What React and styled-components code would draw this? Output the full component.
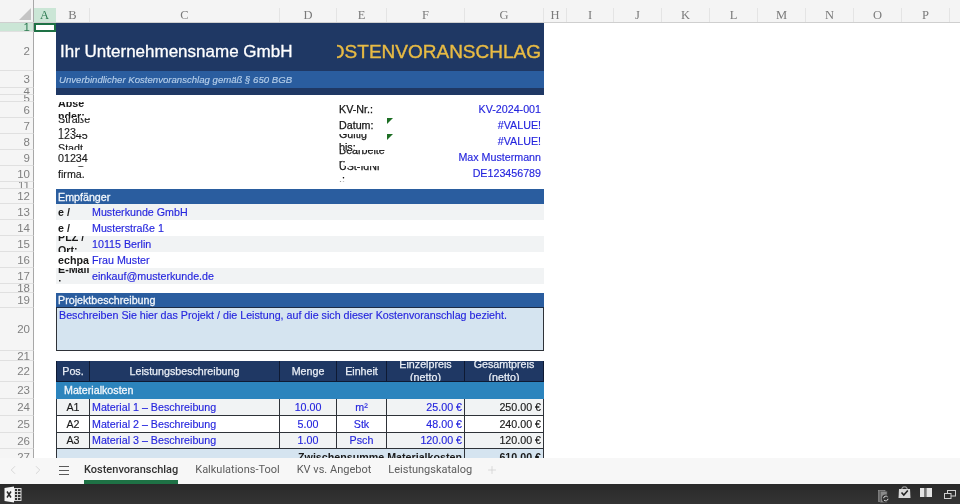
import React from 'react';
import styled, { createGlobalStyle } from 'styled-components';
import { ChevronLeft, ChevronRight, Plus } from 'lucide-react';

const COLS = '34px 22px 34px 190px 57px 50px 78px 79px 1fr';

const Global = createGlobalStyle`
  html, body { margin: 0; padding: 0; background: #fff; }
  #root { width: 960px; height: 504px; overflow: hidden; }
`;

const Page = styled.div`
  width: 960px;
  height: 504px;
  display: flex;
  flex-direction: column;
  overflow: hidden;
  font-family: "Liberation Sans", Arial, sans-serif;
  filter: blur(0.4px);
`;

const ColumnBar = styled.div`
  height: 23px;
  flex: none;
  display: flex;
  padding-top: 8px;
  box-sizing: border-box;
  background: #f4f4f4;
  border-bottom: 1px solid #cfcfcf;
`;

const Corner = styled.div`
  width: 34px;
  flex: none;
  margin-top: -8px;
  position: relative;
  box-sizing: border-box;
  border-right: 1px solid #a8a8a8;
  svg { position: absolute; right: 2px; bottom: 2px; }
`;

const ColHead = styled.div`
  width: ${p => p.$w}px;
  flex: none;
  box-sizing: border-box;
  display: flex;
  align-items: center;
  justify-content: center;
  font-family: "Liberation Serif", serif;
  font-size: 12.5px;
  color: ${p => (p.$active ? '#2c7a50' : '#7a7a7a')};
  background: ${p => (p.$active ? '#cbe6d6' : 'transparent')};
  border-right: 1px solid ${p => (p.$active ? '#cbe6d6' : '#e4e4e4')};
`;

const SheetArea = styled.div`
  flex: 1;
  min-height: 0;
  overflow: hidden;
  background: #fff;
`;

const Row = styled.div`
  display: grid;
  grid-template-columns: ${COLS};
  height: ${p => p.$h}px;
`;

const RowHead = styled.div`
  grid-column: 1;
  box-sizing: border-box;
  display: flex;
  align-items: center;
  justify-content: flex-end;
  padding-right: 3px;
  overflow: hidden;
  font-size: 11.5px;
  color: ${p => (p.$active ? '#2c7a50' : '#808080')};
  background: ${p => (p.$active ? '#cbe6d6' : '#f5f5f5')};
  border-right: 1px solid #a8a8a8;
  border-bottom: 1px solid #e0e0e0;
`;

const Cell = styled.div`
  grid-column: ${p => p.$col};
  min-width: 0;
  box-sizing: border-box;
  position: relative;
  display: flex;
  overflow: hidden;
  align-items: ${p => p.$v || 'center'};
  justify-content: ${p => p.$align || 'flex-start'};
  padding: 0 ${p => p.$pr ?? 2}px 0 ${p => p.$pl ?? 2}px;
  font-size: 10.7px;
  line-height: 13px;
  white-space: nowrap;
  font-weight: ${p => (p.$bold ? 700 : 400)};
  color: ${p => p.$color || '#1a1a1a'};
  background: ${p => p.$bg || 'transparent'};
  -webkit-text-stroke: ${p => (p.$bold ? 0 : '0.15px')} currentColor;
  ${p => p.$grid && 'border-right: 1px solid #2e3238; border-bottom: 1px solid #2e3238;'}
  ${p => p.$first && 'border-left: 1px solid #2e3238;'}
`;

const Selected = styled.div`
  grid-column: 2;
  box-sizing: border-box;
  border: 2px solid #1e7145;
  background: #fff;
`;

const Flag = styled.span`
  position: absolute;
  left: 0;
  top: 0;
  width: 0;
  height: 0;
  border-top: 6px solid #1d6e24;
  border-right: 6px solid transparent;
`;

const CompanyName = styled(Cell)`
  font-size: 17px;
  line-height: 22px;
  color: #fff;
  padding-left: 4px;
  -webkit-text-stroke: 0.3px #fff;
`;

const DocTitle = styled(Cell)`
  font-size: 19px;
  line-height: 22px;
  color: #e8bb44;
  -webkit-text-stroke: 0.4px #e8bb44;
  padding-right: 3px;
`;

const Subtitle = styled(Cell)`
  font-style: italic;
  font-size: 9.6px;
  color: #b6cfea;
  padding-left: 3px;
`;

const BandTitle = styled(Cell)`
  color: #f2f6fb;
  padding-top: 1px;
  -webkit-text-stroke: 0.3px #f2f6fb;
`;

const ProjectTitle = styled(BandTitle)`
  border-bottom: 1px solid #1c2b44;
`;

const ProjectText = styled(Cell)`
  padding-top: 1px;
`;

const InfoLabel = styled(Cell)`
  padding-bottom: 2px;
  -webkit-text-stroke: 0.25px #111;
`;

const InfoValue = styled(Cell)`
  padding-bottom: 2px;
`;

const HeadCell = styled(Cell)`
  color: #e9eef6;
  -webkit-text-stroke: 0.25px #e9eef6;
  text-align: center;
  justify-content: center;
  background: #1f3864;
  border-color: #0e1a33;
`;

const SectionCell = styled(Cell)`
  color: #f2f6fb;
  -webkit-text-stroke: 0.3px #f2f6fb;
  padding-left: 8px;
  background: #2c84bd;
`;

const TabBar = styled.div`
  height: 26px;
  flex: none;
  display: flex;
  align-items: stretch;
  background: #f7f7f7;
  font-family: Roboto, sans-serif;
  font-size: 11px;
  color: #555;
`;

const NavSlot = styled.div`
  width: 25px;
  flex: none;
  display: flex;
  align-items: center;
  justify-content: center;
  padding-bottom: 3px;
  color: #d2d2d2;
`;

const Burger = styled.div`
  width: 10px;
  height: 9px;
  flex: none;
  align-self: center;
  margin: 0 15px 2px 9px;
  border-top: 1px solid #5a5a5a;
  border-bottom: 1px solid #5a5a5a;
  position: relative;
  box-sizing: border-box;
  &::after {
    content: '';
    position: absolute;
    left: 0;
    right: 0;
    top: 3px;
    height: 1px;
    background: #5a5a5a;
  }
`;

const Tab = styled.div`
  flex: none;
  box-sizing: border-box;
  display: flex;
  align-items: center;
  white-space: nowrap;
  height: 26px;
  margin-right: 17px;
  font-weight: ${p => (p.$active ? 500 : 400)};
  color: ${p => (p.$active ? '#333' : '#5c5c5c')};
  border-bottom: 4px solid ${p => (p.$active ? '#1e7145' : 'transparent')};
`;

const TabPlus = styled.div`
  width: 12px;
  margin-left: -3px;
  display: flex;
  align-items: center;
  justify-content: center;
  color: #cfcfcf;
  padding-bottom: 3px;
`;

const TaskBar = styled.div`
  height: 20px;
  flex: none;
  display: flex;
  align-items: center;
  justify-content: space-between;
  padding: 0 4px;
  background: linear-gradient(#2a2a2a, #343434);
`;

const TrayIcons = styled.div`
  display: flex;
  align-items: center;
`;

const TrayIcon = styled.span`
  display: flex;
  margin-left: ${p => p.$ml}px;
  transform: translateY(${p => p.$dy}px);
`;

const blue = '#2626de';
const zebra = '#f1f3f4';
const navy = '#1f3864';
const band = '#2a5d9f';
const pale = '#d5e4f0';

const senderRows = [
  { n: 6, b: <>Abse<br />nder:</>, bBold: true, e: 'KV-Nr.:', g: 'KV-2024-001' },
  { n: 7, b: <>Straße<br />123</>, e: 'Datum:', g: '#VALUE!', flag: true },
  { n: 8, b: <>12345<br />Stadt</>, e: <>Gültig<br />bis:</>, g: '#VALUE!', flag: true },
  { n: 9, b: '01234', e: <>Bearbeite<br />r:</>, g: 'Max Mustermann' },
  { n: 10, b: <>info@<br />firma.<br />de</>, e: <>USt-IdNr<br />.:</>, g: 'DE123456789' },
];

const recipientRows = [
  { n: 13, l: 'e /', v: 'Musterkunde GmbH', bg: zebra },
  { n: 14, l: 'e /', v: 'Musterstraße 1' },
  { n: 15, l: <>PLZ /<br />Ort:</>, v: '10115 Berlin', bg: zebra },
  { n: 16, l: 'echpa', v: 'Frau Muster' },
  { n: 17, l: <>E-Mail<br />:</>, v: 'einkauf@musterkunde.de', bg: zebra },
];

const itemRows = [
  { n: 24, h: 17, pos: 'A1', d: 'Material 1 – Beschreibung', q: '10.00', u: 'm²', p: '25.00 €', t: '250.00 €', bg: zebra },
  { n: 25, h: 17, pos: 'A2', d: 'Material 2 – Beschreibung', q: '5.00', u: 'Stk', p: '48.00 €', t: '240.00 €', bg: '#fff' },
  { n: 26, h: 16, pos: 'A3', d: 'Material 3 – Beschreibung', q: '1.00', u: 'Psch', p: '120.00 €', t: '120.00 €', bg: zebra },
];

const colHeads = [
  ['A', 22], ['B', 34], ['C', 190], ['D', 57], ['E', 50], ['F', 78], ['G', 79], ['H', 23],
  ['I', 47], ['J', 48], ['K', 48], ['L', 48], ['M', 48], ['N', 48], ['O', 48], ['P', 48],
];

const ExcelIcon = () => (
  <svg width="18" height="17" viewBox="0 0 18 17">
    <path d="M0.5 2 L10 0.5 V16.5 L0.5 15 Z" fill="#f4f4f4" />
    <path d="M3 5.5 L7 11.5 M7 5.5 L3 11.5" stroke="#2a2a2a" strokeWidth="1.5" />
    <rect x="10.5" y="2.5" width="6.5" height="12" fill="#2f2f2f" stroke="#dcdcdc" />
    <path d="M10.5 5.5H17M10.5 8.5H17M10.5 11.5H17M13.5 2.5V14.5" stroke="#dcdcdc" strokeWidth="0.9" />
  </svg>
);

const SyncIcon = () => (
  <svg width="12" height="13" viewBox="0 0 12 13">
    <rect x="0.5" y="0.5" width="6.5" height="11" fill="#6d6d6d" stroke="#999" strokeWidth="0.6" />
    <rect x="2.5" y="1.5" width="6.5" height="11" fill="#8a8a8a" stroke="#555" strokeWidth="0.6" />
    <circle cx="7.8" cy="8.5" r="4" fill="#333" />
    <path d="M5.6 8.2a2.3 2.3 0 0 1 4-1.3M10 8.8a2.3 2.3 0 0 1-4 1.3" stroke="#ddd" strokeWidth="1" fill="none" />
  </svg>
);

const BagIcon = () => (
  <svg width="13" height="12" viewBox="0 0 13 12">
    <path d="M4 3V1.8C4 0.6 9 0.6 9 1.8V3" stroke="#bbb" strokeWidth="1" fill="none" />
    <path d="M1 3H12L12.5 12H0.5Z" fill="#d8d8d8" />
    <path d="M3.5 6.5L5.8 9L9.8 4.5" stroke="#222" strokeWidth="1.6" fill="none" />
  </svg>
);

const BookIcon = () => (
  <svg width="12" height="9" viewBox="0 0 12 9">
    <rect x="0" y="0" width="4.5" height="9" fill="#e4e4e4" />
    <rect x="4.5" y="0" width="2" height="9" fill="#777" />
    <rect x="6.5" y="0" width="5.5" height="9" fill="#e4e4e4" />
  </svg>
);

const WindowsIcon = () => (
  <svg width="12" height="9" viewBox="0 0 12 9">
    <rect x="3.5" y="0.5" width="8" height="5.5" fill="none" stroke="#cfcfcf" />
    <rect x="0.5" y="3.5" width="6.5" height="5" fill="#2f2f2f" stroke="#cfcfcf" />
  </svg>
);

export default function App() {
  return (
    <>
      <Global />
      <Page>
        <ColumnBar>
          <Corner>
            <svg width="12" height="12" viewBox="0 0 12 12"><path d="M12 0V12H0Z" fill="#c4c4c4" /></svg>
          </Corner>
          {colHeads.map(([l, w], i) => <ColHead key={l} $w={w} $active={i === 0}>{l}</ColHead>)}
        </ColumnBar>

        <SheetArea>
          <Row $h={9}>
            <RowHead $active>1</RowHead>
            <Selected />
            <Cell $col="3 / 9" $bg={navy} />
          </Row>
          <Row $h={39}>
            <RowHead>2</RowHead>
            <CompanyName $col="3 / 6" $bg={navy}>Ihr Unternehmensname GmbH</CompanyName>
            <DocTitle $col="6 / 9" $bg={navy} $align="flex-end">KOSTENVORANSCHLAG</DocTitle>
          </Row>
          <Row $h={17}>
            <RowHead>3</RowHead>
            <Subtitle $col="3 / 9" $bg={band}>Unverbindlicher Kostenvoranschlag gemäß § 650 BGB</Subtitle>
          </Row>
          <Row $h={7}>
            <RowHead>4</RowHead>
            <Cell $col="3 / 9" $bg={navy} />
          </Row>
          <Row $h={7}>
            <RowHead>5</RowHead>
          </Row>

          {senderRows.map(r => (
            <Row key={r.n} $h={16}>
              <RowHead>{r.n}</RowHead>
              <Cell $col="3" $bold={r.bBold} $pr={0}><span>{r.b}</span></Cell>
              <InfoLabel $col="6" $pr={0}><span>{r.e}</span></InfoLabel>
              <InfoValue $col="7 / 9" $color={blue} $align="flex-end" $pr={3}>
                {r.flag && <Flag />}
                {r.g}
              </InfoValue>
            </Row>
          ))}

          <Row $h={7}><RowHead>11</RowHead></Row>
          <Row $h={15}>
            <RowHead>12</RowHead>
            <BandTitle $col="3 / 9" $bg={band}>Empfänger</BandTitle>
          </Row>
          {recipientRows.map(r => (
            <Row key={r.n} $h={16}>
              <RowHead>{r.n}</RowHead>
              <Cell $col="3" $bold $bg={r.bg} $pr={0}><span>{r.l}</span></Cell>
              <Cell $col="4 / 9" $color={blue} $bg={r.bg}>{r.v}</Cell>
            </Row>
          ))}

          <Row $h={9}><RowHead>18</RowHead></Row>
          <Row $h={15}>
            <RowHead>19</RowHead>
            <ProjectTitle $col="3 / 9" $bg={band}>Projektbeschreibung</ProjectTitle>
          </Row>
          <Row $h={43}>
            <RowHead>20</RowHead>
            <ProjectText $col="3 / 9" $grid $first $v="flex-start" $color={blue} $bg={pale}>
              Beschreiben Sie hier das Projekt / die Leistung, auf die sich dieser Kostenvoranschlag bezieht.
            </ProjectText>
          </Row>
          <Row $h={10}><RowHead>21</RowHead></Row>
          <Row $h={21}>
            <RowHead>22</RowHead>
            <HeadCell $col="3" $grid $first>Pos.</HeadCell>
            <HeadCell $col="4" $grid>Leistungsbeschreibung</HeadCell>
            <HeadCell $col="5" $grid>Menge</HeadCell>
            <HeadCell $col="6" $grid>Einheit</HeadCell>
            <HeadCell $col="7" $grid><span>Einzelpreis<br />(netto)</span></HeadCell>
            <HeadCell $col="8" $grid><span>Gesamtpreis<br />(netto)</span></HeadCell>
          </Row>
          <Row $h={17}>
            <RowHead>23</RowHead>
            <SectionCell $col="3 / 9">Materialkosten</SectionCell>
          </Row>
          {itemRows.map(r => (
            <Row key={r.n} $h={r.h}>
              <RowHead>{r.n}</RowHead>
              <Cell $col="3" $grid $first $bg={r.bg} $align="center">{r.pos}</Cell>
              <Cell $col="4" $grid $bg={r.bg} $color={blue}>{r.d}</Cell>
              <Cell $col="5" $grid $bg={r.bg} $color={blue} $align="center">{r.q}</Cell>
              <Cell $col="6" $grid $bg={r.bg} $color={blue} $align="center">{r.u}</Cell>
              <Cell $col="7" $grid $bg={r.bg} $color={blue} $align="flex-end">{r.p}</Cell>
              <Cell $col="8" $grid $bg={r.bg} $align="flex-end">{r.t}</Cell>
            </Row>
          ))}
          <Row $h={17}>
            <RowHead>27</RowHead>
            <Cell $col="3 / 8" $bold $bg={pale} $align="flex-end" $grid $first>Zwischensumme Materialkosten</Cell>
            <Cell $col="8" $bold $bg={pale} $align="flex-end" $grid>610.00 €</Cell>
          </Row>
        </SheetArea>

        <TabBar>
          <NavSlot><ChevronLeft size={14} strokeWidth={1.5} /></NavSlot>
          <NavSlot><ChevronRight size={14} strokeWidth={1.5} /></NavSlot>
          <Burger />
          <Tab $active>Kostenvoranschlag</Tab>
          <Tab>Kalkulations-Tool</Tab>
          <Tab>KV vs. Angebot</Tab>
          <Tab>Leistungskatalog</Tab>
          <TabPlus><Plus size={12} strokeWidth={1.5} /></TabPlus>
        </TabBar>

        <TaskBar>
          <ExcelIcon />
          <TrayIcons>
            <TrayIcon $ml={0} $dy={2}><SyncIcon /></TrayIcon>
            <TrayIcon $ml={8} $dy={-2}><BagIcon /></TrayIcon>
            <TrayIcon $ml={9} $dy={-2}><BookIcon /></TrayIcon>
            <TrayIcon $ml={12} $dy={0}><WindowsIcon /></TrayIcon>
          </TrayIcons>
        </TaskBar>
      </Page>
    </>
  );
}
